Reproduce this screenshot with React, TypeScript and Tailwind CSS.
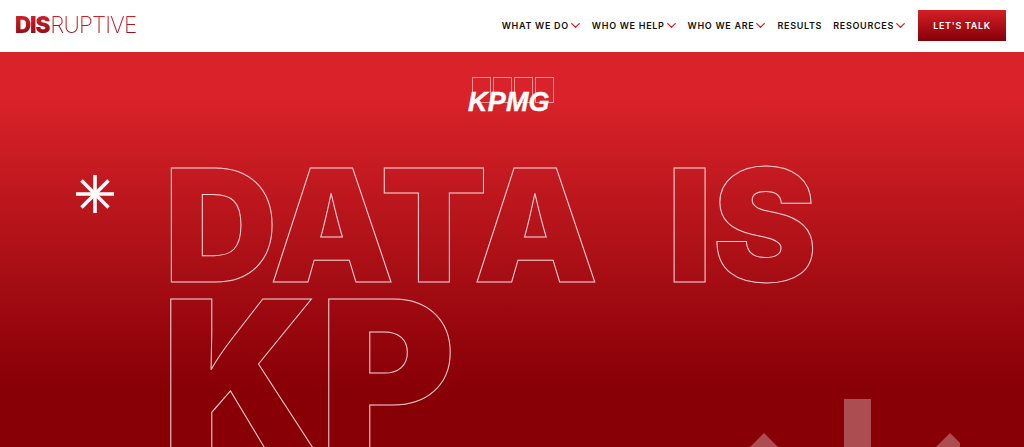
import { ChevronDown } from 'lucide-react'

const NAV = [
  { label: 'WHAT WE DO', caret: true, gap: 'mr-[9px]' },
  { label: 'WHO WE HELP', caret: true, gap: 'mr-[9px]' },
  { label: 'WHO WE ARE', caret: true, gap: 'mr-[9px]' },
  { label: 'RESULTS', caret: false, gap: 'mr-[11px]' },
  { label: 'RESOURCES', caret: true, gap: 'mr-[10px]' },
]

function Logo() {
  return (
    <div className="flex items-center font-['Inter',sans-serif] text-[22.5px] leading-none bg-gradient-to-b from-[#d8222b] to-[#8a0a10] bg-clip-text text-transparent">
      <span className="font-black tracking-[-1.2px] mr-[1px]">DIS</span>
      <span className="font-extralight tracking-[-0.85px]">RUPTIVE</span>
    </div>
  )
}

function KpmgLogo() {
  return (
    <div className="relative w-[88px] h-[38px]">
      <div className="absolute left-[4px] top-0 flex gap-[2px]">
        <div className="w-[19px] h-[26px] border border-white/50" />
        <div className="w-[19px] h-[26px] border border-white/50" />
        <div className="w-[19px] h-[26px] border border-white/50" />
        <div className="w-[19px] h-[26px] border border-white/50" />
      </div>
      <span className="absolute left-0 top-[12px] font-['Liberation_Sans',sans-serif] font-bold italic text-[27px] leading-[26px] tracking-[0.2px] text-white [-webkit-text-stroke:0.4px_#fff]">
        KPMG
      </span>
    </div>
  )
}

export default function App() {
  return (
    <div className="h-[447px] overflow-hidden bg-white font-['Inter',sans-serif]">
      <header className="h-[52px] flex items-center justify-between pl-[15px] pr-[18px] pb-[1px] bg-white">
        <Logo />
        <nav className="flex items-center">
          {NAV.map((n) => (
            <a
              key={n.label}
              className={`flex items-center ${n.gap} text-[9px] font-semibold tracking-[0.7px] text-[#111]`}
            >
              {n.label}
              {n.caret && <ChevronDown size={15} strokeWidth={2.2} className="text-[#d8222b] -ml-[1px]" />}
            </a>
          ))}
          <button className="w-[88px] h-[31px] bg-gradient-to-b from-[#d51f27] to-[#860008] text-white text-[9px] font-semibold tracking-[0.7px]">
            LET'S TALK
          </button>
        </nav>
      </header>

      <section className="relative h-[395px] overflow-hidden bg-gradient-to-b from-[#d92229] from-[12%] to-[#880006] to-[85%]">
        <div className="flex justify-center pt-[25px]">
          <KpmgLogo />
        </div>
        <div className="flex pl-[75px] mt-[45px]">
          <svg width="40" height="40" viewBox="0 0 40 40" className="mt-[14px] shrink-0">
            <g stroke="#fff" strokeWidth="3.6">
              <path d="M20 1v38" />
              <path d="M1 20h38" />
              <path d="M6.5 6.5l27 27" />
              <path d="M33.5 6.5l-27 27" />
            </g>
          </svg>
          <h1 className="ml-[49px] font-black text-transparent whitespace-pre [-webkit-text-stroke:1px_rgba(255,255,255,0.8)]">
            <span className="block text-[157px] leading-[130px] [word-spacing:3px]">{'DATA  IS'}</span>
            <span className="block text-[208px] leading-[174px] mt-[-3px] -ml-[3px]">KP</span>
          </h1>
        </div>
        <svg width="210" height="48" viewBox="0 0 210 48" className="absolute left-[750px] top-[347px]">
          <path d="M94 0h27v48H94z" fill="#fff" fillOpacity="0.3" />
          <path d="M14 34l18 18H-4z" fill="#fff" fillOpacity="0.3" />
          <path d="M200 34l18 18h-36z" fill="#fff" fillOpacity="0.3" />
        </svg>
      </section>
    </div>
  )
}
